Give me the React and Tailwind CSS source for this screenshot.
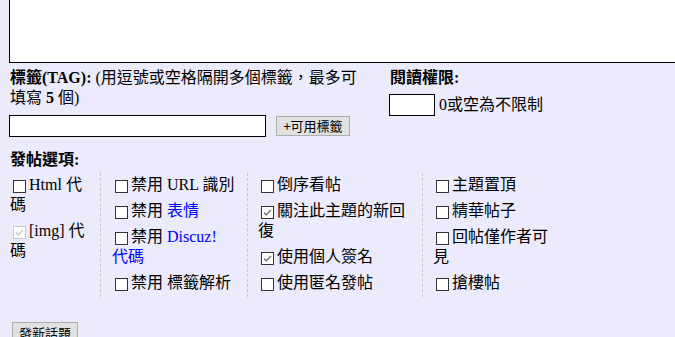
import React from "react";

function Box({ checked = false, disabled = false }) {
  const border = disabled ? "border-[#c9c9c9]" : "border-[#333333]";
  const stroke = disabled ? "#c4c4c4" : "#6e6e6e";
  return (
    <span
      className={`relative inline-block w-[13px] h-[13px] mx-[3px] align-[-3px] bg-white border ${border}`}
    >
      {checked && (
        <svg
          className="absolute left-0 top-0"
          width="11"
          height="11"
          viewBox="0 0 11 11"
        >
          <polyline
            points="2,5.5 4.3,7.8 9,3"
            fill="none"
            stroke={stroke}
            strokeWidth="1.3"
          />
        </svg>
      )}
    </span>
  );
}

function Item({ children, checked, disabled }) {
  return (
    <div>
      <Box checked={checked} disabled={disabled} />
      {children}
    </div>
  );
}

export default function App() {
  return (
    <div className="min-h-[337px] w-[675px] overflow-hidden bg-[#ebebfb] text-black text-[16px] leading-[20px] font-['Liberation_Serif','Noto_Sans_CJK_TC',serif]">
      <div className="ml-[9px] h-[63px] border-l border-b border-black bg-white" />

      <div className="flex pl-[10px] pt-[5px]">
        <div className="w-[380px]">
          <p className="whitespace-nowrap">
            <b>標籤(TAG):</b> (用逗號或空格隔開多個標籤，最多可
            <br />
            填寫 <b>5</b> 個)
          </p>
          <div className="mt-[7px] flex items-center">
            <input
              readOnly
              className="-ml-[1px] w-[257px] h-[22px] border border-black bg-white outline-none"
            />
            <button className="ml-[10px] w-[74px] h-[20px] border border-[#adadad] bg-[#e1e1e1] text-[13px] leading-[18px] font-['Noto_Sans_CJK_TC',sans-serif]">
              +可用標籤
            </button>
          </div>
        </div>
        <div>
          <p className="font-bold">閱讀權限:</p>
          <div className="mt-[6px] flex items-center">
            <input
              readOnly
              className="-ml-[1px] w-[46px] h-[22px] border border-black bg-white outline-none"
            />
            <span className="ml-[4px]">0或空為不限制</span>
          </div>
        </div>
      </div>

      <div className="pl-[10px]">
        <p className="mt-[13px] font-bold">發帖選項:</p>
        <div className="mt-[3px] flex">
          <div className="w-[91px] pr-[9px] pt-[2px] pb-[4px] border-r border-dashed border-[#c8c8c8] flex flex-col gap-[6px]">
            <Item>Html 代碼</Item>
            <Item checked disabled>
              [img] 代碼
            </Item>
          </div>
          <div className="w-[147px] pl-[11px] pr-[7px] pt-[2px] pb-[4px] border-r border-dashed border-[#c8c8c8] flex flex-col gap-[6px]">
            <Item>禁用 URL 識別</Item>
            <Item>
              禁用 <span className="text-[#0000ff]">表情</span>
            </Item>
            <Item>
              禁用{" "}
              <span className="text-[#0000ff]">
                Discuz!
                <br />
                代碼
              </span>
            </Item>
            <Item>禁用 標籤解析</Item>
          </div>
          <div className="w-[175px] pl-[10px] pr-[9px] pt-[2px] pb-[4px] border-r border-dashed border-[#c8c8c8] flex flex-col gap-[6px]">
            <Item>倒序看帖</Item>
            <Item checked>關注此主題的新回復</Item>
            <Item checked>使用個人簽名</Item>
            <Item>使用匿名發帖</Item>
          </div>
          <div className="w-[132px] pl-[10px] pt-[2px] pb-[4px] flex flex-col gap-[6px]">
            <Item>主題置頂</Item>
            <Item>精華帖子</Item>
            <Item>回帖僅作者可見</Item>
            <Item>搶樓帖</Item>
          </div>
        </div>
        <button className="mt-[25px] ml-[2px] w-[66px] h-[22px] border border-[#adadad] bg-[#e1e1e1] text-[13px] leading-[20px] font-['Noto_Sans_CJK_TC',sans-serif]">
          發新話題
        </button>
      </div>
    </div>
  );
}
